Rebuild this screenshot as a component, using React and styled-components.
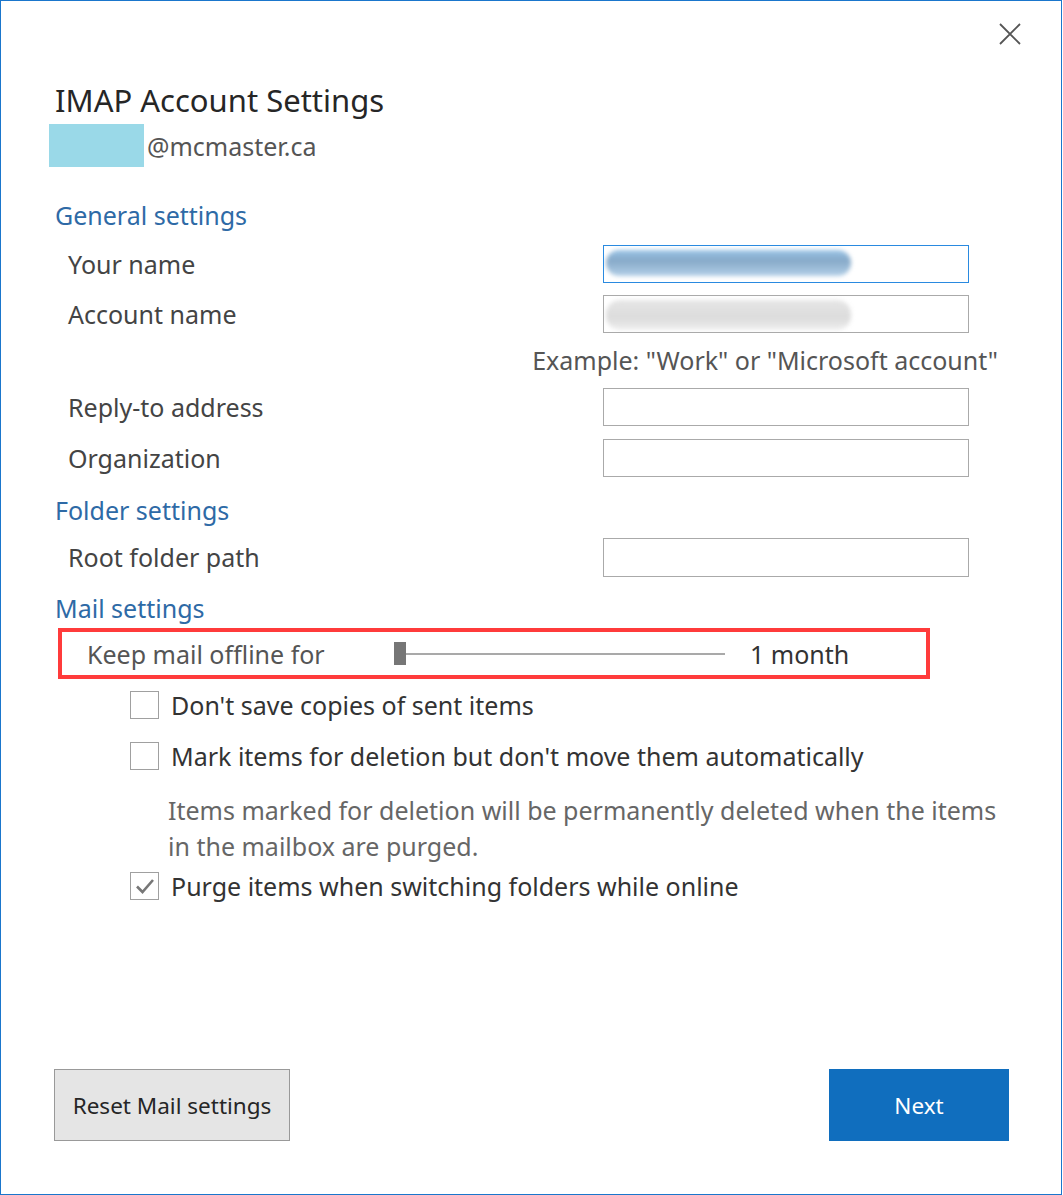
import React from 'react';
import styled, { createGlobalStyle } from 'styled-components';

const Global = createGlobalStyle`
  html, body { margin: 0; padding: 0; background: #fff; }
  * { box-sizing: border-box; }
`;

const Dialog = styled.div`
  width: 1062px;
  height: 1195px;
  border: 1px solid #1a76cc;
  background: #fff;
  display: flex;
  flex-direction: column;
  padding: 0 0 53px 0;
  font-family: "Noto Sans", "Open Sans", sans-serif;
  color: #444;
`;

const TopBar = styled.div`
  height: 79px;
  display: flex;
  justify-content: flex-end;
  align-items: flex-start;
  padding: 20px 38px 0 0;
`;

const CloseButton = styled.button`
  width: 26px;
  height: 26px;
  border: none;
  background: none;
  padding: 0;
  display: flex;
  align-items: center;
  justify-content: center;
`;

const Content = styled.div`
  padding-left: 54px;
  display: flex;
  flex-direction: column;
`;

const Title = styled.h1`
  margin: 0;
  font-size: 31px;
  font-weight: 400;
  line-height: 40px;
  color: #262626;
`;

const AccountLine = styled.div`
  margin-top: 4px;
  height: 43px;
  display: flex;
  align-items: center;
  margin-left: -6px;
  font-size: 25px;
  color: #555;
`;

const Redacted = styled.span`
  width: 95px;
  height: 43px;
  background: #9ad9e8;
  margin-right: 3px;
`;

const SectionHeader = styled.h2`
  margin: ${p => p.$top}px 0 0;
  font-size: 25px;
  font-weight: 400;
  line-height: 34px;
  color: #2e6aa6;
`;

const FieldRow = styled.div`
  margin-top: ${p => p.$top}px;
  display: flex;
  align-items: center;
  height: 38px;
`;

const Label = styled.div`
  width: 548px;
  padding-left: 13px;
  font-size: 25px;
  color: #444;
`;

const Input = styled.div`
  width: 366px;
  height: ${p => p.$h || 38}px;
  border: 1px solid ${p => (p.$focused ? '#2a8ae0' : '#aaa')};
  background: #fff;
  position: relative;
  overflow: hidden;
`;

const Smudge = styled.div`
  position: absolute;
  left: 2px;
  top: ${p => p.$top}px;
  width: 245px;
  height: ${p => p.$h}px;
  border-radius: 14px;
  background: ${p => p.$bg};
  filter: blur(2px);
`;

const Hint = styled.div`
  margin-top: 12px;
  width: 943px;
  text-align: right;
  font-size: 25px;
  line-height: 30px;
  color: #555;
`;

const OfflineBox = styled.div`
  margin: 3px 0 0 3px;
  width: 872px;
  height: 51px;
  border: 4px solid #ff3b3b;
  display: flex;
  align-items: center;
  padding-left: 25px;
  font-size: 25px;
  color: #555;
`;

const OfflineLabel = styled.span`
  width: 307px;
`;

const Slider = styled.div`
  width: 331px;
  height: 23px;
  display: flex;
  align-items: center;
`;

const Thumb = styled.div`
  width: 12px;
  height: 23px;
  background: #767676;
`;

const Track = styled.div`
  flex: 1;
  height: 2px;
  background: #a9a9a9;
`;

const SliderValue = styled.span`
  margin-left: 25px;
  color: #333;
`;

const CheckRow = styled.label`
  margin-top: ${p => p.$top}px;
  margin-left: 75px;
  display: flex;
  align-items: center;
  height: 36px;
  font-size: 25px;
  color: #333;
`;

const Box = styled.span`
  width: 29px;
  height: 28px;
  border: 1px solid #a0a0a0;
  background: #fff;
  margin-right: 12px;
  display: flex;
  align-items: center;
  justify-content: center;
`;

const Note = styled.p`
  margin: 18px 0 0 113px;
  width: 845px;
  font-size: 25px;
  line-height: 36px;
  color: #666;
`;

const Footer = styled.div`
  margin-top: auto;
  padding: 0 52px 0 53px;
  display: flex;
  justify-content: space-between;
`;

const Button = styled.button`
  height: 72px;
  width: ${p => p.$w}px;
  font-family: inherit;
  font-size: 22.5px;
  border: 1px solid ${p => (p.$primary ? '#106ebe' : '#999')};
  background: ${p => (p.$primary ? '#106ebe' : '#e5e5e5')};
  color: ${p => (p.$primary ? '#fff' : '#262626')};
`;

const Check = ({ checked, top, children }) => (
  <CheckRow $top={top}>
    <Box>
      {checked && (
        <svg width="20" height="18" viewBox="0 0 20 18">
          <path d="M2 9.5 L7.5 15 L18 3" fill="none" stroke="#777" strokeWidth="2.6" />
        </svg>
      )}
    </Box>
    {children}
  </CheckRow>
);

export default function App() {
  return (
    <>
      <Global />
      <Dialog>
        <TopBar>
          <CloseButton aria-label="Close">
            <svg width="22" height="22" viewBox="0 0 22 22">
              <path d="M1 1 L21 21 M21 1 L1 21" stroke="#555" strokeWidth="1.8" />
            </svg>
          </CloseButton>
        </TopBar>
        <Content>
          <Title>IMAP Account Settings</Title>
          <AccountLine>
            <Redacted />
            @mcmaster.ca
          </AccountLine>

          <SectionHeader $top={31}>General settings</SectionHeader>
          <FieldRow $top={13}>
            <Label>Your name</Label>
            <Input $focused>
              <Smudge $top={4} $h={26} $bg="linear-gradient(180deg,#9cc6e8 0%,#86a9c8 40%,#b3d0e8 100%)" />
            </Input>
          </FieldRow>
          <FieldRow $top={12}>
            <Label>Account name</Label>
            <Input>
              <Smudge $top={4} $h={30} $bg="linear-gradient(180deg,#e6e6e6 0%,#dcdcdc 60%,#efefef 100%)" />
            </Input>
          </FieldRow>
          <Hint>Example: "Work" or "Microsoft account"</Hint>
          <FieldRow $top={13}>
            <Label>Reply-to address</Label>
            <Input />
          </FieldRow>
          <FieldRow $top={13}>
            <Label>Organization</Label>
            <Input />
          </FieldRow>

          <SectionHeader $top={16}>Folder settings</SectionHeader>
          <FieldRow $top={11}>
            <Label>Root folder path</Label>
            <Input $h={39} />
          </FieldRow>

          <SectionHeader $top={15}>Mail settings</SectionHeader>
          <OfflineBox>
            <OfflineLabel>Keep mail offline for</OfflineLabel>
            <Slider>
              <Thumb />
              <Track />
            </Slider>
            <SliderValue>1 month</SliderValue>
          </OfflineBox>

          <Check top={8}>Don't save copies of sent items</Check>
          <Check top={15}>Mark items for deletion but don't move them automatically</Check>
          <Note>
            Items marked for deletion will be permanently deleted when the items in the mailbox are purged.
          </Note>
          <Check top={4} checked>Purge items when switching folders while online</Check>
        </Content>
        <Footer>
          <Button $w={236}>Reset Mail settings</Button>
          <Button $w={180} $primary>Next</Button>
        </Footer>
      </Dialog>
    </>
  );
}
